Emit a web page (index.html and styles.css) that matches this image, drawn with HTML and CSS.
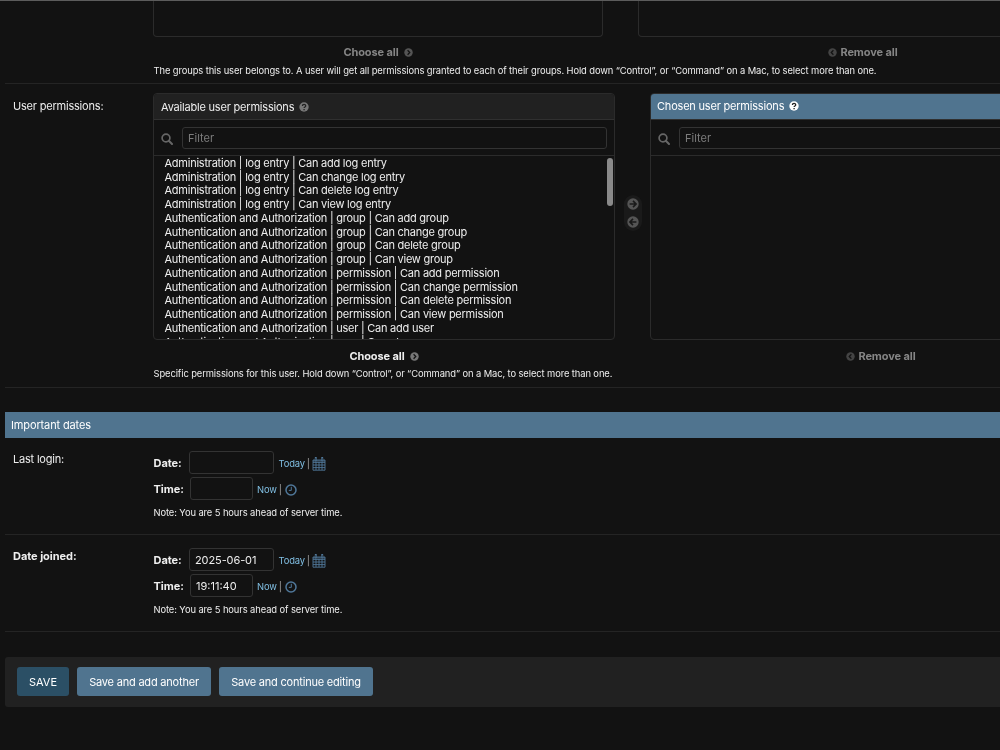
FILE: index.html
```html
<!DOCTYPE html>
<html lang="en">
<head>
    <meta charset="UTF-8">
    <meta name="viewport" content="width=device-width, initial-scale=1.0">
    <title>Change user</title>
    <link rel="stylesheet" href="styles.css">
</head>
<body>
    <!-- shared icons -->
    <svg class="sprite" width="0" height="0">
        <symbol id="help" viewBox="0 0 10 10">
            <circle cx="5" cy="5" r="4.7" fill="currentColor"/>
            <path class="cut" d="M3.4 4C3.4 1.9 6.7 1.9 6.7 3.9C6.7 5 5.1 5 5.1 6.1M5.1 7V8.2" fill="none" stroke-width="1.3"/>
        </symbol>
        <symbol id="search" viewBox="0 0 12 12">
            <circle cx="5" cy="5" r="3.9" fill="none" stroke="currentColor" stroke-width="1.7"/>
            <path d="M7.8 7.8L11 11" stroke="currentColor" stroke-width="2" stroke-linecap="round"/>
        </symbol>
        <symbol id="chevron" viewBox="0 0 10 10">
            <circle cx="5" cy="5" r="4.7" fill="currentColor"/>
            <path d="M4 2.5L6.4 5L4 7.5" fill="none" stroke="#121212" stroke-width="1.4"/>
        </symbol>
        <symbol id="arrow" viewBox="0 0 12 12">
            <circle cx="6" cy="6" r="5.7" fill="currentColor"/>
            <path d="M2.6 6H8.8M6 2.9L9.1 6L6 9.1" fill="none" stroke="#1a1a1a" stroke-width="1.6"/>
        </symbol>
        <symbol id="calendar" viewBox="0 0 14 14">
            <path d="M1 3H13V13.2H1ZM1 5.4H13M1 8H13M1 10.6H13M4 5V13M7 5V13M10 5V13" fill="none" stroke="currentColor" stroke-width="0.9"/>
            <path d="M1 3H13V4.8H1Z" fill="currentColor" opacity="0.5"/>
            <path d="M3.8 0.8V3.6M10.2 0.8V3.6" stroke="currentColor" stroke-width="2" stroke-linecap="round"/>
            <path d="M3.8 1V3.4M10.2 1V3.4" stroke="#121212" stroke-width="0.5"/>
        </symbol>
        <symbol id="clock" viewBox="0 0 12 12">
            <circle cx="6" cy="6" r="5" fill="none" stroke="currentColor" stroke-width="1.5"/>
            <path d="M6.3 2.8V6.4H3.8" fill="none" stroke="currentColor" stroke-width="1"/>
        </symbol>
    </svg>

    <main class="content">
        <div class="form-row groups">
            <div class="field">
                <div class="selector">
                    <div class="column">
                        <div class="box"></div>
                        <div class="all">Choose all <svg><use href="#chevron"/></svg></div>
                    </div>
                    <div class="column">
                        <div class="box"></div>
                        <div class="all remove"><svg class="flip"><use href="#chevron"/></svg> Remove all</div>
                    </div>
                </div>
                <div class="help">The groups this user belongs to. A user will get all permissions granted to each of their groups. Hold down “Control”, or “Command” on a Mac, to select more than one.</div>
            </div>
        </div>

        <div class="form-row permissions">
            <div class="label">User permissions:</div>
            <div class="field">
                <div class="selector">
                    <div class="column">
                        <div class="box">
                            <h2 class="title">Available user permissions <svg><use href="#help"/></svg></h2>
                            <div class="filter">
                                <svg><use href="#search"/></svg>
                                <input type="text" placeholder="Filter">
                            </div>
                            <div class="list">
                                <ul>
                                    <li>Administration | log entry | Can add log entry</li>
                                    <li>Administration | log entry | Can change log entry</li>
                                    <li>Administration | log entry | Can delete log entry</li>
                                    <li>Administration | log entry | Can view log entry</li>
                                    <li>Authentication and Authorization | group | Can add group</li>
                                    <li>Authentication and Authorization | group | Can change group</li>
                                    <li>Authentication and Authorization | group | Can delete group</li>
                                    <li>Authentication and Authorization | group | Can view group</li>
                                    <li>Authentication and Authorization | permission | Can add permission</li>
                                    <li>Authentication and Authorization | permission | Can change permission</li>
                                    <li>Authentication and Authorization | permission | Can delete permission</li>
                                    <li>Authentication and Authorization | permission | Can view permission</li>
                                    <li>Authentication and Authorization | user | Can add user</li>
                                    <li>Authentication and Authorization | user | Can change user</li>
                                </ul>
                                <div class="thumb"></div>
                            </div>
                        </div>
                        <div class="all active">Choose all <svg><use href="#chevron"/></svg></div>
                    </div>
                    <div class="chooser">
                        <svg><use href="#arrow"/></svg>
                        <svg class="flip"><use href="#arrow"/></svg>
                    </div>
                    <div class="column chosen">
                        <div class="box">
                            <h2 class="title">Chosen user permissions <svg><use href="#help"/></svg></h2>
                            <div class="filter">
                                <svg><use href="#search"/></svg>
                                <input type="text" placeholder="Filter">
                            </div>
                            <div class="list"></div>
                        </div>
                        <div class="all remove"><svg class="flip"><use href="#chevron"/></svg> Remove all</div>
                    </div>
                </div>
                <div class="help">Specific permissions for this user. Hold down “Control”, or “Command” on a Mac, to select more than one.</div>
            </div>
        </div>

        <h2 class="section-title">Important dates</h2>

        <div class="form-row dates">
            <div class="label">Last login:</div>
            <div class="field">
                <div class="date-line">
                    <label for="login-date">Date:</label>
                    <input type="text" id="login-date" class="date">
                    <a>Today</a><i>|</i><svg class="calendar"><use href="#calendar"/></svg>
                </div>
                <div class="date-line">
                    <label for="login-time">Time:</label>
                    <input type="text" id="login-time" class="time">
                    <a>Now</a><i>|</i><svg class="clock"><use href="#clock"/></svg>
                </div>
                <div class="note">Note: You are 5 hours ahead of server time.</div>
            </div>
        </div>

        <div class="form-row dates">
            <div class="label required">Date joined:</div>
            <div class="field">
                <div class="date-line">
                    <label for="joined-date">Date:</label>
                    <input type="text" id="joined-date" class="date" value="2025-06-01">
                    <a>Today</a><i>|</i><svg class="calendar"><use href="#calendar"/></svg>
                </div>
                <div class="date-line">
                    <label for="joined-time">Time:</label>
                    <input type="text" id="joined-time" class="time" value="19:11:40">
                    <a>Now</a><i>|</i><svg class="clock"><use href="#clock"/></svg>
                </div>
                <div class="note">Note: You are 5 hours ahead of server time.</div>
            </div>
        </div>

        <div class="submit-row">
            <button class="default">SAVE</button>
            <button class="another">Save and add another</button>
            <button class="continue">Save and continue editing</button>
        </div>
    </main>
</body>
</html>
```
FILE: styles.css
```css
* {
    box-sizing: border-box;
}
body {
    margin: 0;
    width: 1000px;
    height: 750px;
    overflow: hidden;
    background: #121212;
    border-top: 1px solid #5c5c5c;
    color: #eee;
    font-family: Inter, sans-serif;
    font-size: 11px;
}
.sprite {
    display: block;
}
.content {
    padding-left: 5px;
    overflow: hidden;
    will-change: transform;
}
.form-row {
    display: flex;
    padding-left: 8px;
    border-bottom: 1px solid #242424;
}
.label {
    width: 140px;
    flex: none;
    line-height: 14px;
    letter-spacing: -0.2px;
}
.required {
    font-weight: 700;
    letter-spacing: -0.05px;
}
.field {
    flex: none;
}
.selector {
    display: flex;
}
.box {
    border: 1px solid #2b2b2b;
    border-radius: 4px;
    overflow: hidden;
}
.all {
    display: flex;
    align-items: center;
    justify-content: center;
    gap: 5px;
    height: 14px;
    color: #858585;
    font-weight: 700;
    letter-spacing: -0.1px;
}
.all svg {
    width: 9px;
    height: 9px;
    margin-top: 1px;
    color: #555;
}
.all.remove {
    gap: 3px;
}
.all.remove svg {
    color: #444;
}
.all.active {
    color: #eee;
}
.all.active svg {
    color: #777;
}
.flip {
    transform: scaleX(-1);
}
.help, .note {
    padding-left: 0.5px;
    font-size: 9.4px;
    line-height: 12px;
    letter-spacing: -0.1px;
    white-space: nowrap;
}

/* groups, scrolled to its bottom edge */
.groups {
    height: 83px;
    padding-left: 148px;
}
.groups .selector {
    gap: 35px;
}
.groups .column {
    width: 450px;
}
.groups .box {
    height: 36px;
    border-top: 0;
    border-radius: 0 0 4px 4px;
    margin-bottom: 8px;
}
.groups .help {
    margin-top: 6px;
}

/* permissions */
.permissions {
    height: 304px;
    padding-top: 9px;
}
.permissions .label {
    padding-top: 6px;
}
.permissions .column {
    width: 462px;
}
.permissions .box {
    height: 247px;
    margin-bottom: 9px;
}
.title {
    display: flex;
    align-items: center;
    gap: 5px;
    margin: 0;
    height: 26px;
    padding-left: 7px;
    background: #212121;
    border-bottom: 1px solid #303030;
    font-size: 11px;
    font-weight: 400;
    letter-spacing: -0.2px;
}
.title svg {
    width: 10px;
    height: 10px;
    color: #777;
}
.cut {
    stroke: #212121;
}
.chosen .title {
    margin: -1px -1px 0;
    height: 27px;
    background: #50748f;
    color: #fff;
}
.chosen .title svg {
    color: #fff;
}
.filter {
    display: flex;
    align-items: center;
    height: 36px;
    padding: 0 7px;
    border-bottom: 1px solid #2b2b2b;
}
.filter svg {
    width: 12px;
    height: 12px;
    margin: 2px 9px 0 0;
    color: #666;
}
input {
    height: 23px;
    padding: 0 5px;
    background: #121212;
    border: 1px solid #333;
    border-radius: 3px;
    color: #eee;
    font-family: inherit;
    font-size: 11px;
}
.filter input {
    flex: 1;
    height: 22px;
}
input::placeholder {
    color: #7c7c7c;
}
.list {
    position: relative;
    height: 183px;
    overflow: hidden;
}
.list ul {
    margin: 0;
    padding: 1px 0 0 10.5px;
    list-style: none;
    line-height: 13.73px;
    letter-spacing: -0.24px;
    white-space: nowrap;
}
.thumb {
    position: absolute;
    top: 2px;
    right: 1px;
    width: 6px;
    height: 48px;
    border-radius: 3px;
    background: #8a8a8a;
}
.chooser {
    display: flex;
    flex-direction: column;
    align-items: center;
    justify-content: space-around;
    width: 18px;
    height: 36px;
    margin: 102px 8px 0 9px;
    border-radius: 9px;
    background: #1a1a1a;
}
.chooser svg {
    width: 12px;
    height: 12px;
    color: #555;
}
.permissions .help {
    margin-top: 5px;
}

/* dates */
.section-title {
    margin: 24px 0 0;
    height: 26px;
    padding-left: 6px;
    background: #50748f;
    color: #fff;
    font-size: 11px;
    font-weight: 400;
    line-height: 26px;
    letter-spacing: -0.13px;
}
.dates {
    height: 97px;
    padding-top: 13px;
}
.dates .label {
    padding-top: 1px;
}
.date-line {
    display: flex;
    align-items: center;
    height: 23px;
    margin-bottom: 3px;
}
.date-line label {
    width: 36px;
    padding-left: 0.5px;
    font-weight: 700;
    letter-spacing: -0.05px;
}
.date-line .date {
    width: 85px;
    margin-right: 4.5px;
    letter-spacing: -0.1px;
}
.date-line .time {
    width: 63px;
    margin: 0 4px 0 1px;
}
.date-line a {
    color: #81bfe3;
    font-size: 9.4px;
    letter-spacing: -0.15px;
    padding-top: 2px;
}
.date-line i {
    margin: 2px 3px 0 2px;
    color: #aaa;
    font-size: 9.4px;
    font-style: normal;
}
.date-line svg {
    width: 14px;
    height: 14px;
    margin-top: 3px;
    color: #50789a;
}
.date-line .calendar {
    margin-left: -1px;
}
.date-line .clock {
    width: 12px;
    height: 12px;
}
.note {
    margin-top: 7px;
}

.submit-row {
    display: flex;
    gap: 8px;
    margin-top: 25px;
    height: 50px;
    padding: 10px 12px;
    border-radius: 3px 0 0 3px;
    background: #212121;
}
button {
    height: 29px;
    padding: 0;
    border: 0;
    border-radius: 3px;
    background: #50748f;
    color: #fff;
    font-family: inherit;
    font-size: 11px;
    letter-spacing: -0.2px;
}
.default {
    width: 52px;
    background: #2b4f65;
    letter-spacing: 0;
}
.another {
    width: 134px;
}
.continue {
    width: 154px;
}
```
